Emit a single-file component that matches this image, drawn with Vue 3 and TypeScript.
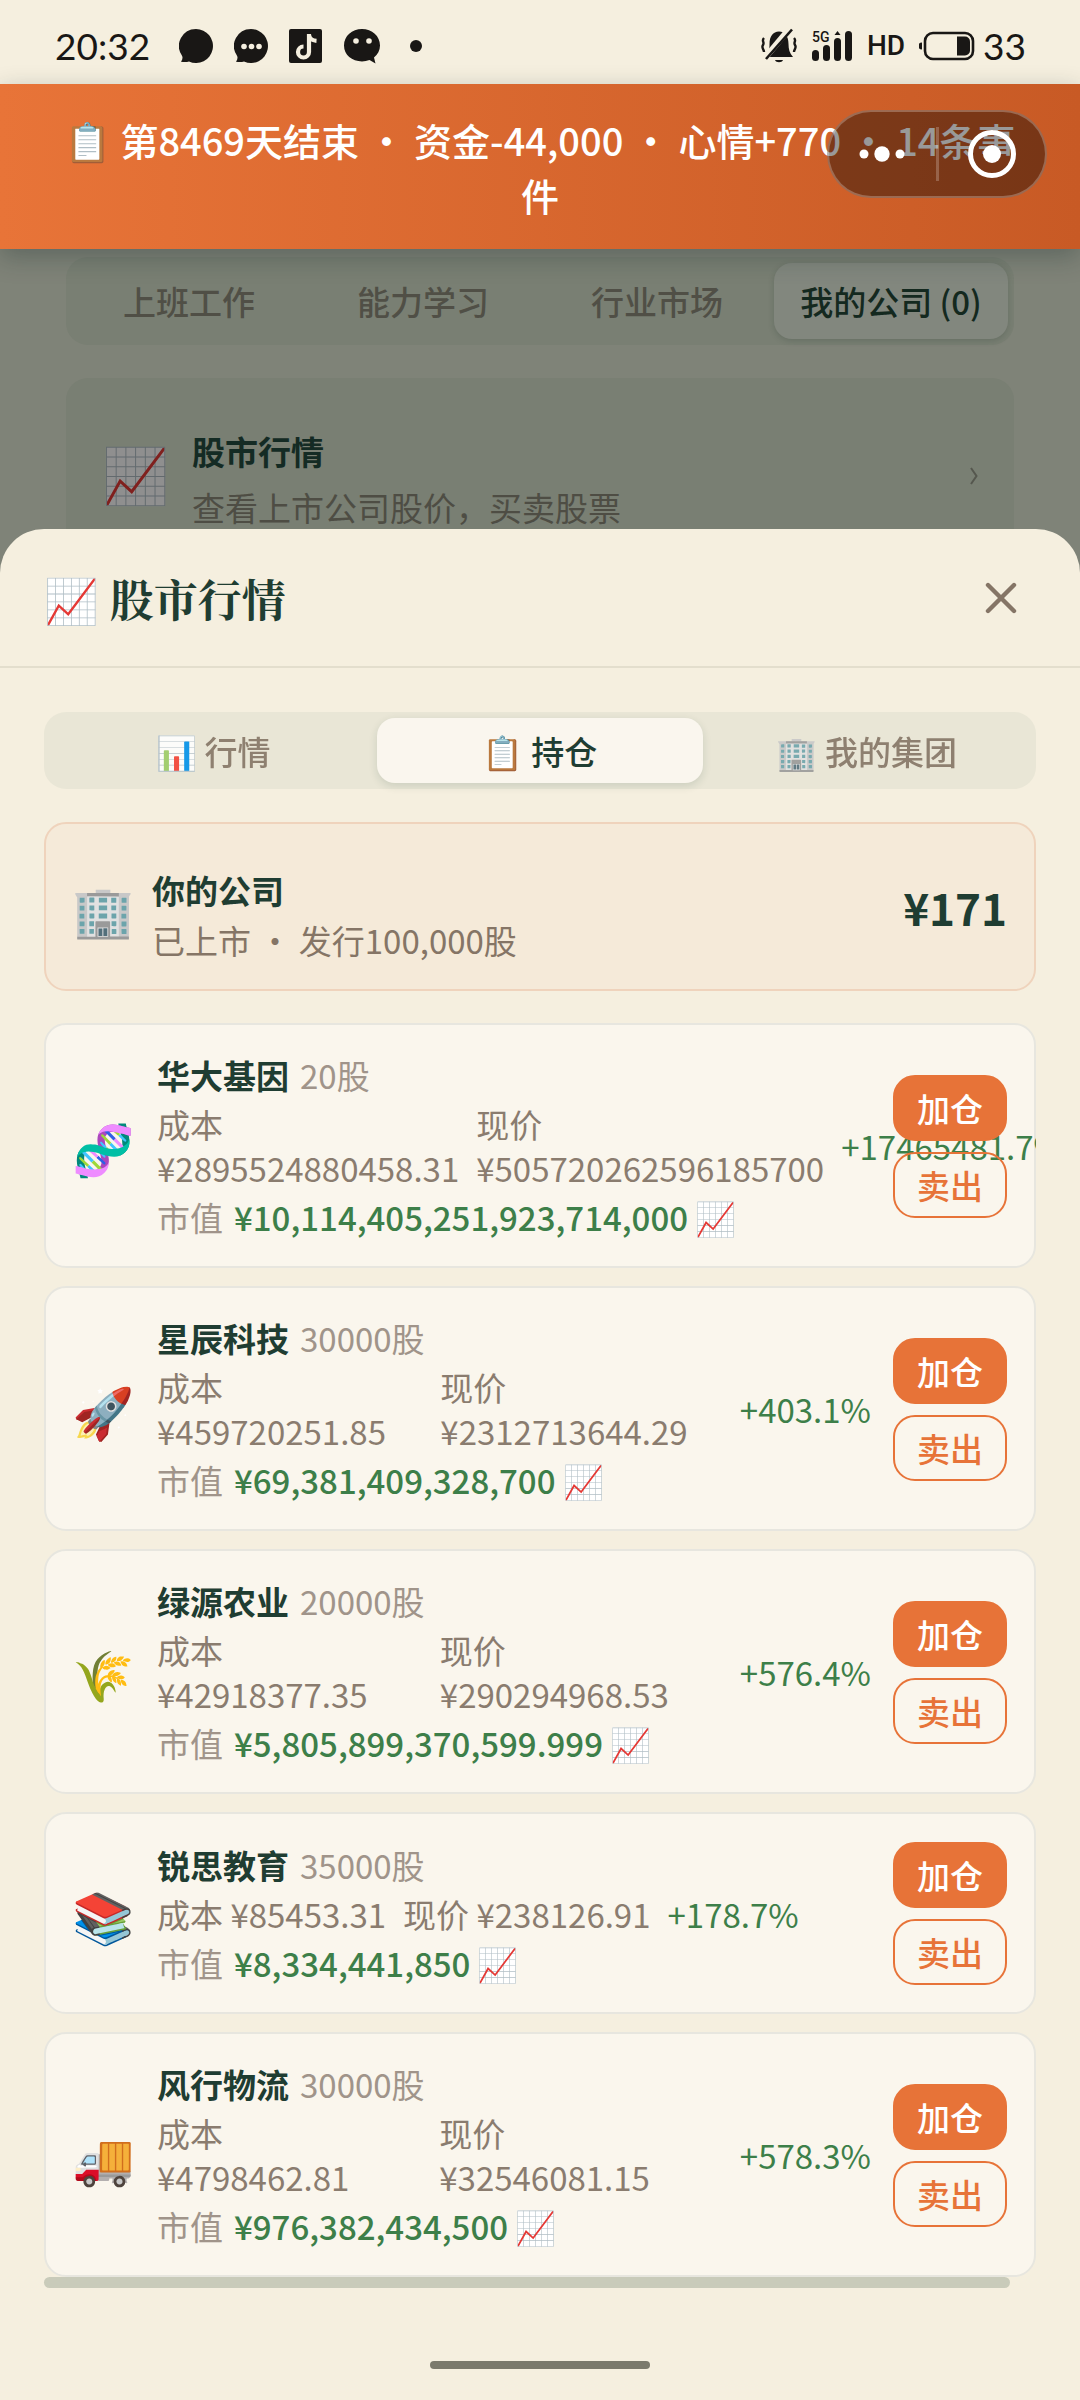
<script setup lang="ts">
import { ref } from 'vue'

interface Holding {
  icon: string
  name: string
  shares: number
  cost: string
  price: string
  change: string
  value: string
}

const pageTabs = ['上班工作', '能力学习', '行业市场', '我的公司 (0)']
const activePage = ref(3)

const sheetTabs = [
  { icon: '📊', label: '行情' },
  { icon: '📋', label: '持仓' },
  { icon: '🏢', label: '我的集团' },
]
const activeSheet = ref(1)

const holdings: Holding[] = [
  { icon: '🧬', name: '华大基因', shares: 20, cost: '2895524880458.31', price: '505720262596185700', change: '+17465481.7%', value: '10,114,405,251,923,714,000' },
  { icon: '🚀', name: '星辰科技', shares: 30000, cost: '459720251.85', price: '2312713644.29', change: '+403.1%', value: '69,381,409,328,700' },
  { icon: '🌾', name: '绿源农业', shares: 20000, cost: '42918377.35', price: '290294968.53', change: '+576.4%', value: '5,805,899,370,599.999' },
  { icon: '📚', name: '锐思教育', shares: 35000, cost: '85453.31', price: '238126.91', change: '+178.7%', value: '8,334,441,850' },
  { icon: '🚚', name: '风行物流', shares: 30000, cost: '4798462.81', price: '32546081.15', change: '+578.3%', value: '976,382,434,500' },
]
</script>

<template>
  <div class="app">
    <header class="status">
      <div class="status-left">
        <span class="clock">20:32</span>
        <svg width="34" height="36" viewBox="0 0 34 36"><path d="M17 1a17 17 0 1 1-7 32.500c-3 1-6 .5-8 .2 1.500-2 2-4 1-6A17 17 0 0 1 17 1z" fill="#191715" /></svg>
        <svg width="34" height="36" viewBox="0 0 34 36">
          <path d="M17 1a17 17 0 1 1-7 32.500c-3 1-6 .5-8 .2 1.500-2 2-4 1-6A17 17 0 0 1 17 1z" fill="#191715" />
          <g fill="#f5efdf"><circle cx="10" cy="18.500" r="2.800" /><circle cx="17.500" cy="18.500" r="2.800" /><circle cx="25" cy="18.500" r="2.800" /></g>
        </svg>
        <svg width="33" height="34" viewBox="0 0 33 34">
          <rect width="33" height="34" rx="2" fill="#191715" />
          <path d="M20 5v18a5.500 5.500 0 1 1-5.500-5.500M20 6c.6 3.500 3 5.500 7.500 5.800" fill="none" stroke="#f5efdf" stroke-width="4.200" />
        </svg>
        <svg width="38" height="36" viewBox="0 0 38 36">
          <path d="M19 1c10 0 18 7 18 16.500 0 5-2.300 9-6 12l1.500 6-6-3.500c-2.500.9-5 1.400-7.500 1.400C9 33.400 1 27 1 17.500S9 1 19 1z" fill="#191715" />
          <circle cx="13" cy="13" r="2.800" fill="#f5efdf" /><circle cx="26" cy="13" r="2.800" fill="#f5efdf" />
        </svg>
        <i class="more-dot"></i>
      </div>
      <div class="status-right">
        <svg width="38" height="36" viewBox="0 0 38 36" fill="none" stroke="#191715">
          <path d="M5 29c4-4 4.500-8 4.500-13C9.500 8 13 4 19 3.500 25 4 28.500 8 28.500 16c0 5 1 9 4.500 13z" fill="#191715" stroke="none" />
          <path d="M15 32h8c-1 3-7 3-8 0z" fill="#191715" stroke="none" />
          <path d="M4 31L30 0" stroke="#f5efdf" stroke-width="6" />
          <path d="M6 31L32 1.500" stroke-width="2.600" />
          <path d="M4 10c-3 3 1 4-1 7s1 4 1 7M34 10c3 3-1 4 1 7s-1 4-1 7" stroke-width="2.400" />
        </svg>
        <div class="signal">
          <span class="net">5G</span>
          <svg width="41" height="32" viewBox="0 0 41 32" fill="#191715">
            <rect y="20" width="7" height="11" rx="3.500" /><rect x="11" y="15" width="7" height="16" rx="3.500" />
            <rect x="22" y="8" width="7" height="23" rx="3.500" /><rect x="33" y="1" width="7" height="30" rx="3.500" />
            <path d="M22.500 5l3-4 3 4z" />
          </svg>
        </div>
        <span class="hd">HD</span>
        <svg class="battery" width="56" height="30" viewBox="0 0 56 30">
          <rect x="6" y="2" width="48" height="26" rx="8" fill="none" stroke="#191715" stroke-width="2.600" />
          <path d="M38 5.500h8a5 5 0 0 1 5 5v9a5 5 0 0 1-5 5h-8z" fill="#191715" />
          <path d="M3 11.500v7a3.500 3.500 0 0 1 0-7z" fill="#191715" />
        </svg>
        <span class="level">33</span>
      </div>
    </header>

    <div class="banner">
      <p>📋 第8469天结束 ・ 资金-44,000 ・ 心情+770 ・ 14条事件</p>
      <div class="capsule">
        <button type="button" aria-label="更多">
          <svg width="46" height="18" viewBox="0 0 46 18" fill="#fff"><circle cx="5" cy="9" r="4.500" /><circle cx="23" cy="9" r="7.700" /><circle cx="41" cy="9" r="4.500" /></svg>
        </button>
        <i></i>
        <button type="button" aria-label="关闭小程序">
          <svg width="48" height="50" viewBox="0 0 48 50"><circle cx="24" cy="25" r="21.500" fill="none" stroke="#fff" stroke-width="5" /><circle cx="24" cy="25" r="9" fill="#fff" /></svg>
        </button>
      </div>
    </div>

    <main class="backdrop">
      <nav class="page-tabs">
        <button v-for="(tab, i) in pageTabs" :key="tab" type="button" :class="{ active: i === activePage }" @click="activePage = i">{{ tab }}</button>
      </nav>
      <a class="entry" href="#market">
        <span class="entry-icon">📈</span>
        <span class="entry-text"><strong>股市行情</strong><span>查看上市公司股价，买卖股票</span></span>
        <svg width="8" height="18" viewBox="0 0 8 18"><path d="M1 1l5.500 8L1 17" fill="none" stroke="#55574e" stroke-width="2" /></svg>
      </a>
    </main>

    <section class="sheet">
      <header class="sheet-head">
        <h1>📈 股市行情</h1>
        <button type="button" aria-label="关闭">
          <svg width="32" height="32" viewBox="0 0 32 32"><path d="M3 3l26 26M29 3L3 29" stroke="#857566" stroke-width="4.400" stroke-linecap="round" /></svg>
        </button>
      </header>

      <div class="body">
        <nav class="tabs">
          <button v-for="(tab, i) in sheetTabs" :key="tab.label" type="button" :class="{ active: i === activeSheet }" @click="activeSheet = i">{{ tab.icon }} {{ tab.label }}</button>
        </nav>

        <div class="company">
          <span class="icon">🏢</span>
          <div class="company-text"><strong>你的公司</strong><span>已上市 ・ 发行100,000股</span></div>
          <b>¥171</b>
        </div>

        <ul class="list">
          <li v-for="h in holdings" :key="h.name">
            <span class="icon">{{ h.icon }}</span>
            <div class="info">
              <div class="name"><strong>{{ h.name }}</strong><span>{{ h.shares }}股</span></div>
              <div class="prices"><span>成本 ¥{{ h.cost }}</span><span>现价 ¥{{ h.price }}</span><span class="up">{{ h.change }}</span></div>
              <div class="value"><span>市值</span><b>¥{{ h.value }} 📈</b></div>
            </div>
            <div class="actions">
              <button type="button" class="buy">加仓</button>
              <button type="button" class="sell">卖出</button>
            </div>
          </li>
        </ul>
        <div class="scrollbar"></div>
      </div>
      <div class="home"></div>
    </section>
  </div>
</template>

<style>
body {
  margin: 0;
  background: #f5efdf;
}
</style>

<style scoped>
* {
  box-sizing: border-box;
}
.app {
  display: flex;
  flex-direction: column;
  min-height: 100vh;
  overflow: hidden;
  font-family: "Noto Sans CJK SC", "Noto Color Emoji", sans-serif;
  font-size: 33px;
  line-height: 44px;
  color: #1f3d32;
  background: #f5efdf;
}
button {
  padding: 0;
  border: 0;
  background: none;
  font: inherit;
  color: inherit;
  cursor: pointer;
}
svg {
  display: block;
  flex: none;
}
.status {
  display: flex;
  justify-content: space-between;
  align-items: center;
  height: 84px;
  padding: 8px 54px 0 55px;
  color: #191715;
}
.status-left,
.status-right {
  display: flex;
  align-items: center;
}
.status-left {
  gap: 21px;
}
.clock,
.level {
  font-family: Lato, "Noto Sans CJK SC", sans-serif;
  font-size: 37px;
}
.clock {
  margin-right: 8px;
}
.more-dot {
  width: 12px;
  height: 12px;
  margin-left: 8px;
  border-radius: 50%;
  background: #191715;
}
.status-right {
  gap: 14px;
}
.signal {
  position: relative;
}
.net {
  position: absolute;
  top: 0;
  left: 0;
  font-family: Roboto, sans-serif;
  font-size: 14px;
  font-weight: 500;
  line-height: 14px;
}
.hd {
  font-family: Roboto, sans-serif;
  font-size: 28px;
  font-weight: 500;
}
.battery {
  margin-right: -6px;
}
.banner {
  position: relative;
  z-index: 2;
  padding: 28px 55px 27px;
  color: #fff;
  background: linear-gradient(90deg, #e87438, #c85a25);
  box-shadow: 0 8px 24px rgba(20, 40, 40, 0.3);
}
.banner p {
  margin: 0;
  font-size: 38px;
  font-weight: 500;
  line-height: 55px;
  text-align: center;
}
.capsule {
  position: absolute;
  top: 26px;
  right: 33px;
  display: flex;
  align-items: center;
  width: 220px;
  height: 88px;
  border: 2px solid rgba(255, 255, 255, 0.25);
  border-radius: 44px;
  background: rgba(0, 0, 0, 0.4);
}
.capsule button {
  display: grid;
  flex: 1;
  place-items: center;
}
.capsule i {
  width: 3px;
  height: 54px;
  background: rgba(255, 255, 255, 0.22);
}
.backdrop {
  display: flex;
  flex-direction: column;
  gap: 33px;
  padding: 8px 66px 0;
  background: #7f8378;
}
.page-tabs,
.tabs {
  display: grid;
  grid-auto-flow: column;
  grid-auto-columns: 1fr;
  padding: 6px;
  border-radius: 22px;
  font-weight: 500;
}
.page-tabs {
  height: 88px;
  color: #504f46;
  background: #797f73;
}
.page-tabs .active {
  border-radius: 18px;
  color: #14291f;
  background: #82877e;
  box-shadow: 0 2px 6px rgba(30, 50, 40, 0.2);
}
.entry {
  display: flex;
  align-items: center;
  gap: 22px;
  height: 196px;
  padding: 0 36px;
  border-radius: 22px;
  color: #4e4d44;
  background: #797f73;
  text-decoration: none;
}
.entry-icon {
  width: 68px;
  margin-bottom: 8px;
  font-size: 54px;
  line-height: 60px;
  filter: brightness(0.56);
}
.entry-text {
  display: flex;
  flex: 1;
  flex-direction: column;
  gap: 6px;
  padding-top: 6px;
  line-height: 50px;
}
.entry-text strong {
  color: #142b24;
}
.sheet {
  position: relative;
  z-index: 1;
  display: flex;
  flex: 1;
  flex-direction: column;
  margin-top: -45px;
  border-radius: 44px 44px 0 0;
  background: #f5efdf;
}
.sheet-head {
  display: flex;
  justify-content: space-between;
  align-items: center;
  height: 139px;
  padding: 0 63px 0 44px;
  border-bottom: 2px solid #e3decd;
}
.sheet-head h1 {
  margin: 0;
  font-family: "Noto Serif CJK SC", "Noto Sans CJK SC", "Noto Color Emoji", serif;
  font-size: 44px;
  line-height: 60px;
}
.body {
  padding: 44px 44px 0;
}
.tabs {
  height: 77px;
  margin-bottom: 33px;
  color: #857566;
  background: #e9e6d6;
}
.tabs button:not(.active) {
  opacity: 0.9;
}
.tabs .active {
  border-radius: 18px;
  color: #1f3d32;
  background: #faf6ee;
  box-shadow: 0 3px 8px rgba(31, 61, 50, 0.14);
}
.company {
  display: flex;
  align-items: center;
  gap: 18px;
  margin-bottom: 32px;
  padding: 25px 27px 24px 26px;
  border: 2px solid #efd3bc;
  border-radius: 22px;
  background: #f5ead9;
}
.icon {
  width: 62px;
  font-size: 50px;
  line-height: 56px;
}
.company-text {
  display: flex;
  flex: 1;
  flex-direction: column;
  padding-top: 16px;
  line-height: 50px;
  color: #857566;
}
.company-text strong {
  color: #1f3d32;
}
.company b {
  font-size: 44px;
}
.list {
  display: flex;
  flex-direction: column;
  gap: 18px;
  margin: 0;
  padding: 0;
  overflow: hidden;
  list-style: none;
}
.list li {
  display: flex;
  align-items: center;
  padding: 28px 27px 27px 26px;
  border: 2px solid #e7e6df;
  border-radius: 22px;
  background: #faf6ed;
}
.info {
  display: flex;
  flex: 1;
  flex-direction: column;
  gap: 5px;
  min-width: 0;
  margin: 0 22px 0 23px;
}
.name,
.value {
  display: flex;
  gap: 11px;
  color: #a0948a;
}
.name strong {
  color: #1f3d32;
}
.prices {
  display: flex;
  align-items: center;
  gap: 17px;
  color: #8a7c6f;
}
.prices .up {
  color: #3d7f49;
}
.value b {
  font-weight: 500;
  color: #3d7f49;
}
.actions {
  display: flex;
  flex-direction: column;
  gap: 11px;
}
.actions button {
  width: 114px;
  height: 66px;
  border: 2px solid #e77338;
  border-radius: 22px;
  font-weight: 500;
  color: #e77338;
}
.actions .buy {
  color: #fff;
  background: #e77338;
}
.scrollbar {
  height: 11px;
  margin-right: 26px;
  border-radius: 6px;
  background: #c9cbba;
}
.home {
  width: 220px;
  height: 8px;
  margin: auto auto 31px;
  border-radius: 4px;
  background: #7b7a6c;
}
</style>
